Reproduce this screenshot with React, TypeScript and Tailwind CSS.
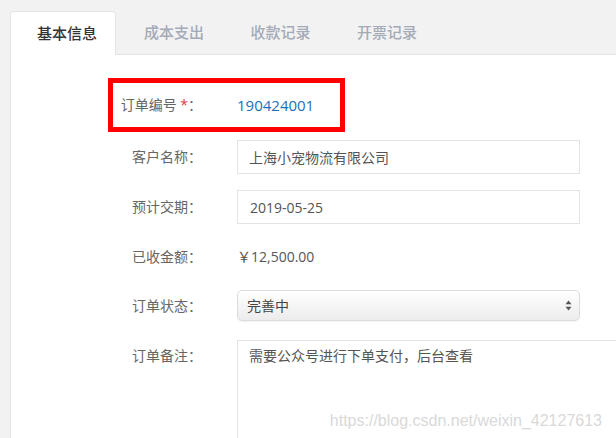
import React from 'react';

const tabs = ['基本信息', '成本支出', '收款记录', '开票记录'];

const Label: React.FC<{ children: React.ReactNode; className?: string }> = ({ children, className = '' }) => (
  <div className={`shrink-0 text-right text-[14px] leading-[20px] text-[#666] ${className}`}>{children}</div>
);

export default function App() {
  return (
    <div className="relative flex h-[438px] w-full flex-col overflow-hidden bg-[#f2f2f2] pl-[10px] pt-[11px] font-['Open_Sans','Noto_Sans_CJK_SC',sans-serif]">
      {/* Tabs */}
      <div className="relative z-10 -mb-px flex h-[44px] shrink-0">
        {tabs.map((t, i) =>
          i === 0 ? (
            <div
              key={t}
              className="flex w-[106px] items-center rounded-t-[4px] border border-b-0 border-[#e4e4e4] bg-white pb-px pl-[26px] text-[15px] font-medium text-[#333]"
            >
              {t}
            </div>
          ) : (
            <div key={t} className="flex w-[106.5px] items-center pb-px pl-[28px] text-[15px] font-medium text-[#a3aab8]">
              {t}
            </div>
          )
        )}
      </div>

      {/* Panel */}
      <div className="flex-1 border-l border-t border-[#e4e4e4] bg-white">
        {/* Order number, highlighted */}
        <div className="ml-[97px] mt-[23px] flex h-[54px] w-[237px] items-center border-[5px] border-[#ff0000]">
          <Label className="w-[89px]">
            订单编号 <span className="text-[#e4393c]">*</span>：
          </Label>
          <div className="ml-[35px] text-[15px] leading-[20px] text-[#1b6fb8]">190424001</div>
        </div>

        {/* Customer */}
        <div className="mt-[8px] flex items-center">
          <Label className="w-[191px]">客户名称：</Label>
          <div className="ml-[35px] flex h-[34px] w-[343px] items-center border border-[#e3e3e3] pl-[11px] text-[14px] text-[#555]">
            上海小宠物流有限公司
          </div>
        </div>

        {/* Date */}
        <div className="mt-[16px] flex items-center">
          <Label className="w-[191px]">预计交期：</Label>
          <div className="ml-[35px] flex h-[34px] w-[343px] items-center border border-[#e3e3e3] pl-[12px] text-[14px] text-[#555]">
            2019-05-25
          </div>
        </div>

        {/* Amount */}
        <div className="mt-[16px] flex h-[34px] items-center">
          <Label className="w-[191px]">已收金额：</Label>
          <div className="ml-[35px] text-[14px] leading-[20px] text-[#555]">￥12,500.00</div>
        </div>

        {/* Status select */}
        <div className="mt-[16px] flex items-center">
          <Label className="w-[191px]">订单状态：</Label>
          <div className="ml-[35px] flex h-[31px] w-[343px] items-center justify-between rounded-[5px] border border-[#dcdcdc] bg-gradient-to-b from-white to-[#ececec] pl-[9px] pr-[7px] text-[14px] text-[#444] shadow-[0_1px_1px_rgba(0,0,0,0.05)]">
            <span>完善中</span>
            <svg width="7" height="11" viewBox="0 0 7 11">
              <path d="M3.5 0.5 L6.5 4.3 L0.5 4.3 Z" fill="#555" />
              <path d="M3.5 10.5 L6.5 6.7 L0.5 6.7 Z" fill="#555" />
            </svg>
          </div>
        </div>

        {/* Remarks */}
        <div className="mt-[19px] flex items-start">
          <Label className="w-[191px] pt-[6px]">订单备注：</Label>
          <div className="ml-[35px] h-[120px] w-[420px] shrink-0 border border-[#e3e3e3] pl-[11px] pt-[5px] text-[14px] leading-[20px] text-[#555]">
            需要公众号进行下单支付，后台查看
          </div>
        </div>
      </div>

      {/* Watermark */}
      <div className="pointer-events-none absolute right-[14px] top-[409px] font-['Liberation_Sans',sans-serif] text-[16px] text-[#d9d9d9]">
        https://blog.csdn.net/weixin_42127613
      </div>
    </div>
  );
}
